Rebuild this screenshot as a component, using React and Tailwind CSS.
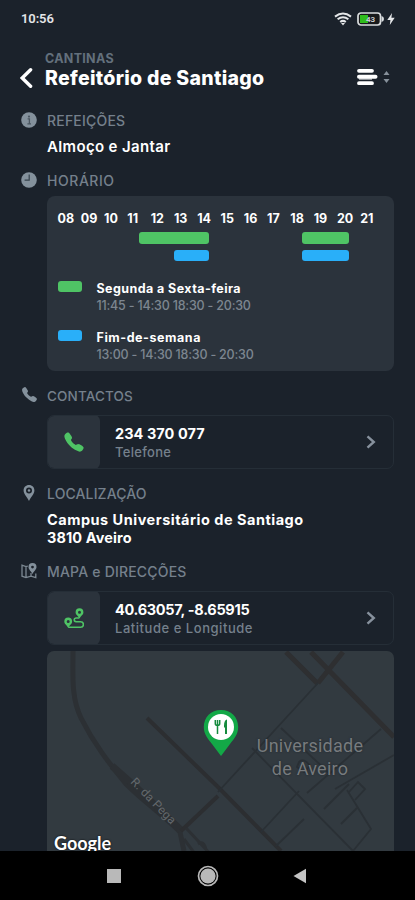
import React from 'react';
import { IoCall } from 'react-icons/io5';

const hours = ['08', '09', '10', '11', '12', '13', '14', '15', '16', '17', '18', '19', '20', '21'];

const InfoIcon = () => (
    <svg width="16" height="16" viewBox="0 0 16 16">
        <circle cx="8" cy="8" r="7.8" fill="#84919c" />
        <circle cx="8" cy="4.6" r="1.1" fill="#4a5660" />
        <path d="M6.6 6.8H8.4V11.6M6.4 11.8H10" stroke="#4a5660" strokeWidth="1.3" fill="none" />
    </svg>
);

const ClockIcon = () => (
    <svg width="16" height="16" viewBox="0 0 16 16">
        <circle cx="8" cy="8" r="7.8" fill="#84919c" />
        <path d="M8.2 2.5V8.2H3.6" stroke="#35414b" strokeWidth="1.2" fill="none" />
    </svg>
);

const PinIcon = () => (
    <svg width="16" height="16" viewBox="0 0 16 16">
        <path
            fillRule="evenodd"
            fill="#84919c"
            d="M8 0C4.800 0 2.600 2.300 2.600 5.400C2.600 9 6 11.500 8 16C10 11.500 13.400 9 13.400 5.400C13.400 2.300 11.200 0 8 0ZM8 2.500A3 3 0 0 1 8 8.500A3 3 0 0 1 8 2.500Z"
        />
        <circle cx="8" cy="5.5" r="1.2" fill="#84919c" />
    </svg>
);

const MapIcon = () => (
    <svg width="16" height="16" viewBox="0 0 16 16" fill="none" stroke="#7b8791" strokeWidth="1.3">
        <path d="M6.8 3.2L5 3.6L1 2.2V13.2L5 14.6L10 13.2L14.8 14.6V10.5M5 3.6V14.5M10 10V13.2" />
        <path
            fillRule="evenodd"
            fill="#84919c"
            stroke="none"
            d="M11.500 0A4 4 0 0 0 7.500 4C7.500 6.700 10.200 8 11.500 11C12.800 8 15.500 6.700 15.500 4A4 4 0 0 0 11.500 0ZM11.500 2.700A1.400 1.400 0 0 1 11.500 5.500A1.400 1.400 0 0 1 11.500 2.700Z"
        />
    </svg>
);

const RouteIcon = () => (
    <svg width="20" height="21" viewBox="0 0 20 21" fill="none">
        <path
            fillRule="evenodd"
            fill="#4fc465"
            d="M15.500 .3A3.900 3.900 0 0 0 11.600 4.200C11.600 6.700 14.200 7.800 15.500 10.600C16.800 7.800 19.400 6.700 19.400 4.200A3.900 3.900 0 0 0 15.500 .3ZM15.500 2.700A1.500 1.500 0 0 1 15.500 5.700A1.500 1.500 0 0 1 15.500 2.700ZM4.200 9.500A3.900 3.900 0 0 0 .3 13.400C.3 15.900 2.900 17 4.200 19.800C5.500 17 8.100 15.900 8.100 13.400A3.900 3.900 0 0 0 4.200 9.500ZM4.200 11.900A1.500 1.500 0 0 1 4.200 14.900A1.500 1.500 0 0 1 4.200 11.900Z"
        />
        <path d="M15.2 10H12.1A1.8 1.8 0 0 0 12.1 13.7H16.6A2.7 2.7 0 0 1 16.600 19.300H4.200" stroke="#4fc465" strokeWidth="1.6" />
    </svg>
);

const Chevron = () => (
    <svg width="10" height="14" viewBox="0 0 10 14" className="mr-[17px]">
        <path d="M1.5 1.3L7.8 7L1.5 12.7" fill="none" stroke="#87919d" strokeWidth="2.4" />
    </svg>
);

const SectionTitle = ({ icon, className, children }) => (
    <div className="flex h-5 items-center">
        <span className="-mt-[3px] w-[26px] shrink-0">{icon}</span>
        <h2 className={`whitespace-nowrap leading-5 font-medium text-[#75808c] ${className}`}>{children}</h2>
    </div>
);

const LinkCard = ({ icon, title, subtitle, titleClass, subtitleClass }) => (
    <div className="ml-[26px] flex h-[54px] items-center overflow-hidden rounded-[7px] border border-[#252e37]">
        <div className="-ml-px flex h-[54px] w-[53px] shrink-0 items-center justify-center rounded-[6px] bg-[#2b333c]">{icon}</div>
        <div className="ml-[15px] flex-1 whitespace-nowrap">
            <p className={`text-[14.5px] leading-[19px] font-bold text-white ${titleClass}`}>{title}</p>
            <p className={`text-[13px] leading-[18px] font-medium text-[#75808c] ${subtitleClass}`}>{subtitle}</p>
        </div>
        <Chevron />
    </div>
);

const Legend = ({ color, title, time, titleClass }) => (
    <div className="flex">
        <span className={`mt-px h-[11px] w-6 rounded-[3px] ${color}`} />
        <div className="ml-[15px] whitespace-nowrap">
            <p className={`text-[12.5px] leading-[17px] font-bold text-white ${titleClass}`}>{title}</p>
            <p className="text-[12.5px] leading-[18px] font-medium tracking-[-0.2px] text-[#7d8690]">{time}</p>
        </div>
    </div>
);

const MapView = () => (
    <div className="relative ml-[26px] mt-[6px] h-[200px] overflow-hidden rounded-t-[7px] bg-[#323a40]">
        <svg width="347" height="200" viewBox="0 0 347 200" fill="none" stroke="#2c3034">
            <path d="M26 0C26 25 24 46 34 67C47 93 62 112 79 133C97 151 116 164 133 181L137 200" strokeWidth="5" />
            <path d="M65 115L89 136L134 179" strokeWidth="7" />
            <path d="M100 67L171 136L234 200M134 180L171 145" stroke="#2c2e31" strokeWidth="4" />
            <path d="M139 177L167 207M137 188L151 207M151 193Q157 189 159 199" strokeWidth="3" />
            <path d="M239 1L271 33M264 1L347 86M296 1L271 32" stroke="#2e2f31" strokeWidth="5" />
            <path d="M271 32L171 141M234 77L283 123M205 97L306 200M214 181L252 140M229 195L257 168M277 158L302 133M260 142L334 78M294 173L310 157M288 138L347 104M300 139L324 178L306 200M302 141L311 131L318 138L308 149M252 111Q257 106 263 115L257 121L250 116Z" stroke="#2a3035" strokeWidth="1.8" />
        </svg>
        <span className="absolute left-[77px] top-[142px] rotate-[46deg] whitespace-nowrap font-[Roboto] text-[12px] leading-[16px] tracking-[0.2px] text-[#63686c]">
            R. da Pega
        </span>
        <div className="absolute left-[208px] top-[83px] w-[110px] text-center font-[Roboto] text-[18px] leading-[23px] tracking-[0.25px] text-[#777b7e] [text-shadow:0_0_2px_#20262b]">
            Universidade<br />de Aveiro
        </div>
        <svg className="absolute left-[156px] top-[58px]" width="36" height="48" viewBox="0 0 36 48">
            <path d="M18 1C8 1 .8 8.3 .8 18C.8 25 5 30 9 35L18 47L27 35C31 30 35.2 25 35.2 18C35.2 8.3 28 1 18 1Z" fill="#13a847" />
            <circle cx="18" cy="18" r="13" fill="#fff" />
            <path d="M12.3 11V14.5Q12.3 16.5 14.5 16.5Q16.7 16.5 16.7 14.5V11M14.5 11V25" stroke="#168b3e" strokeWidth="1.5" fill="none" />
            <path d="M21 17Q21 11 24 10.5V25H22V18.5H21Z" fill="#168b3e" />
        </svg>
        <span className="absolute left-[7px] top-[184px] font-[Lato] text-[18px] leading-[16px] font-bold text-white [text-shadow:0_0_2px_#000]">
            Google
        </span>
    </div>
);

const StatusBar = () => (
    <div className="flex h-[38px] items-center pl-[21px] pr-[20px] text-[#e4e6e8]">
        <span className="flex-1 font-[Roboto] text-[13px] font-semibold tracking-[-0.1px]">10:56</span>
        <svg width="18" height="14" viewBox="0 0 18 14" fill="none" stroke="#e4e6e8" strokeWidth="2">
            <path d="M1 4.6Q9-1.7 17 4.6M3.6 7.3Q9 3.1 14.4 7.3M6.2 10Q9 7.8 11.8 10" />
            <path d="M7 11L9 13.5L11 11Z" fill="#e4e6e8" stroke="none" />
        </svg>
        <svg className="ml-[5px]" width="27" height="14" viewBox="0 0 27 14">
            <rect x="1" y="1" width="22.5" height="12" rx="3" fill="#17191b" stroke="#dadddf" strokeWidth="1.7" />
            <rect x="3" y="3" width="8" height="8" fill="#2fbc1c" />
            <path d="M24.5 4Q27 4.5 27 7Q27 9.5 24.5 10Z" fill="#dadddf" />
            <text x="9" y="10" fontFamily="Roboto" fontSize="8" fontWeight="700" fill="#c9cccf">43</text>
        </svg>
        <svg className="ml-[3px]" width="8" height="12" viewBox="0 0 8 12">
            <path d="M5 0L.3 7H3.4L2.8 12L7.7 4.8H4.4Z" fill="#e4e6e8" />
        </svg>
    </div>
);

const Header = () => (
    <header className="flex h-[73px] pt-[12px] pl-[20px]">
        <svg className="mt-[17px] shrink-0" width="14" height="22" viewBox="0 0 14 22">
            <path d="M10.6 2.8L2.2 11L10.6 19.2" fill="none" stroke="#fff" strokeWidth="3.4" strokeLinecap="round" />
        </svg>
        <div className="ml-[11px] flex-1 whitespace-nowrap">
            <p className="text-[12.5px] leading-[18px] font-bold tracking-[0.3px] text-[#63707c]">CANTINAS</p>
            <h1 className="text-[19.5px] leading-[21px] font-extrabold tracking-[0.3px] text-white">Refeitório de Santiago</h1>
        </div>
        <svg className="mt-[18px] mr-[24px] shrink-0" width="34" height="18" viewBox="0 0 34 18">
            <path d="M2 7.2H15V12H2Z" fill="#8e9398" />
            <g stroke="#fff" strokeLinecap="round">
                <path d="M2 2.8H15M2 15.2H15" strokeWidth="3.8" />
                <path d="M2 8.7H18.5" strokeWidth="4" />
            </g>
            <path d="M26.5 7L29.5 3L32.5 7ZM26.5 11L29.5 15L32.5 11Z" fill="#87919b" />
        </svg>
    </header>
);

const NavBar = () => (
    <nav className="flex h-[49px] items-center bg-black">
        <span className="ml-[107px] size-[14px] bg-[#b9b9b9]" />
        <svg className="ml-[76px]" width="22" height="22" viewBox="0 0 22 22">
            <circle cx="11" cy="11" r="9.5" fill="none" stroke="#b9b9b9" strokeWidth="1.7" />
            <circle cx="11" cy="11" r="7.6" fill="#b9b9b9" />
        </svg>
        <svg className="ml-[74px]" width="14" height="16" viewBox="0 0 14 16">
            <path d="M13 .8V15.2L.5 8Z" fill="#c4c4c4" />
        </svg>
    </nav>
);

const App = () => {
    return (
        <div className="h-[900px] w-[415px] overflow-hidden bg-[#1b222b] font-['Inter',sans-serif]">
            <StatusBar />
            <Header />
            <main className="h-[740px] overflow-hidden pl-[21px] pr-[21px]">
                {/* Meals */}
                <SectionTitle icon={<InfoIcon />} className="text-[14px] tracking-[0.2px]">REFEIÇÕES</SectionTitle>
                <p className="ml-[26px] mt-[6px] text-[15px] leading-5 font-semibold tracking-[0.35px] text-white">Almoço e Jantar</p>

                {/* Timetable */}
                <div className="mt-[14px]">
                    <SectionTitle icon={<ClockIcon />} className="text-[14px] tracking-[0.55px]">HORÁRIO</SectionTitle>
                </div>
                <div className="ml-[26px] mt-[5px] h-[175px] rounded-[8px] bg-[#2b333c] pl-[10.5px] pt-[14px]">
                    <div className="grid w-[326px] grid-cols-14 text-[12.5px] leading-[18px] font-bold text-white">
                        {hours.map((hour) => (
                            <span key={hour}>{hour}</span>
                        ))}
                    </div>
                    <div className="mt-[4px] grid w-[326px] grid-cols-[repeat(28,minmax(0,1fr))] gap-y-[6px]">
                        <span className="col-start-8 col-end-14 h-[12px] rounded-[3px] bg-[#4fc465]" />
                        <span className="col-start-22 col-end-26 h-[12px] rounded-[3px] bg-[#4fc465]" />
                        <span className="col-start-11 col-end-14 h-[11px] rounded-[3px] bg-[#29aff9]" />
                        <span className="col-start-22 col-end-26 h-[11px] rounded-[3px] bg-[#29aff9]" />
                    </div>
                    <div className="mt-[19px] space-y-[14px]">
                        <Legend
                            color="bg-[#4fc465]"
                            title="Segunda a Sexta-feira"
                            time="11:45 - 14:30 18:30 - 20:30"
                            titleClass="tracking-[0.42px]"
                        />
                        <Legend
                            color="bg-[#29aff9]"
                            title="Fim-de-semana"
                            time="13:00 - 14:30 18:30 - 20:30"
                            titleClass="tracking-[0.55px]"
                        />
                    </div>
                </div>

                {/* Contacts */}
                <div className="mt-[15px]">
                    <SectionTitle icon={<IoCall size={17} color="#84919c" />} className="text-[13.5px] tracking-[0.15px]">CONTACTOS</SectionTitle>
                </div>
                <div className="mt-[9px]">
                    <LinkCard icon={<IoCall size={22} color="#4fc465" />} title="234 370 077" subtitle="Telefone" titleClass="tracking-[0.05px]" subtitleClass="tracking-[0.3px]" />
                </div>

                {/* Location */}
                <div className="mt-[15px]">
                    <SectionTitle icon={<PinIcon />} className="text-[14px] tracking-[0.12px]">LOCALIZAÇÃO</SectionTitle>
                </div>
                <p className="ml-[26px] mt-[7px] whitespace-nowrap text-[14.5px] leading-[18px] font-bold text-white">
                    <span className="tracking-[0.5px]">Campus Universitário de Santiago</span>
                    <br />
                    <span className="tracking-[0.1px]">3810 Aveiro</span>
                </p>

                {/* Map and directions */}
                <div className="mt-[15px]">
                    <SectionTitle icon={<MapIcon />} className="text-[14px] tracking-[0.2px]">MAPA e DIRECÇÕES</SectionTitle>
                </div>
                <div className="mt-[9px]">
                    <LinkCard icon={<RouteIcon />} title="40.63057, -8.65915" subtitle="Latitude e Longitude" titleClass="tracking-[-0.3px]" subtitleClass="tracking-[0.54px]" />
                </div>
                <MapView />
            </main>
            <NavBar />
        </div>
    );
};

export default App;
